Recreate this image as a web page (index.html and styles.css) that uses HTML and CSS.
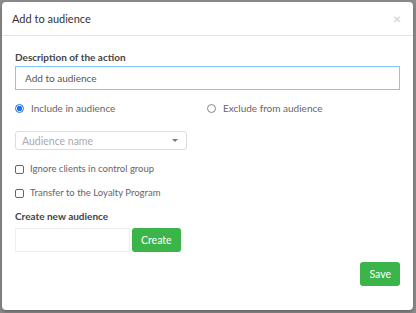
FILE: index.html
```html
<!DOCTYPE html>
<html lang="en">

<head>
    <meta charset="UTF-8">
    <title>Add to audience</title>
    <link rel="stylesheet" href="styles.css">
</head>

<body>
    <div class="modal">
        <div class="modal-header">
            <span class="modal-title">Add to audience</span>
            <span class="close">&times;</span>
        </div>
        <div class="modal-body">
            <label class="field-label">Description of the action</label>
            <input class="text-input focused" type="text" value="Add to audience">

            <div class="radio-row">
                <label class="radio"><span class="radio-dot checked"></span>Include in audience</label>
                <label class="radio"><span class="radio-dot"></span>Exclude from audience</label>
            </div>

            <div class="select">
                <span>Audience name</span>
                <span class="caret"></span>
            </div>

            <label class="check"><span class="box"></span>Ignore clients in control group</label>
            <label class="check"><span class="box"></span>Transfer to the Loyalty Program</label>

            <label class="field-label">Create new audience</label>
            <div class="create-row">
                <input class="text-input small" type="text">
                <button class="btn create">Create</button>
            </div>

            <div class="footer">
                <button class="btn">Save</button>
            </div>
        </div>
    </div>
</body>

</html>
```

FILE: styles.css
```css
body {
    margin: 0;
    height: 313px;
    background: #8c8c8c;
    font-family: 'Lato', sans-serif;
    color: #666;
    padding: 2px 3px 3px 2px;
    box-sizing: border-box;
}

.modal {
    background: white;
    border-radius: 4px;
    height: 100%;
    box-shadow: 0 2px 4px rgba(0, 0, 0, 0.3);
}

.modal-header {
    display: flex;
    justify-content: space-between;
    align-items: center;
    height: 33px;
    padding: 0 12px 0 10px;
    border-bottom: 1px solid #e5e5e5;
}

.modal-title {
    font-size: 11px;
    color: #333;
}

.close {
    font-size: 14px;
    color: #ccc;
}

.modal-body {
    padding: 15px 13px 0 13px;
}

.field-label {
    display: block;
    font-size: 10px;
    line-height: 13px;
    font-weight: 700;
    color: #444;
    margin-bottom: 2px;
}

.text-input {
    display: block;
    box-sizing: border-box;
    width: 100%;
    height: 24px;
    border: 1px solid #ddd;
    padding: 0 9px;
    font-family: inherit;
    font-size: 10px;
    color: #555;
    outline: none;
}

.text-input.focused {
    border-color: #7ecdf1;
}

.radio-row {
    display: grid;
    grid-template-columns: 192px 1fr;
    margin-top: 11px;
    font-size: 10px;
    line-height: 14px;
}

.radio {
    display: flex;
    align-items: center;
    gap: 7px;
}

.radio-dot {
    width: 9px;
    height: 9px;
    border-radius: 50%;
    border: 1px solid #888;
    box-sizing: border-box;
}

.radio-dot.checked {
    border: 1px solid #1a73e8;
    background: radial-gradient(#1a73e8 0 2.5px, white 3px);
}

.select {
    display: flex;
    justify-content: space-between;
    align-items: center;
    width: 172px;
    height: 19px;
    box-sizing: border-box;
    border: 1px solid #ddd;
    border-radius: 3px;
    margin-top: 16px;
    padding: 0 8px 0 6px;
    font-size: 10.5px;
    color: #aaa;
}

.caret {
    border: 3px solid transparent;
    border-top: 3px solid #777;
    margin-top: 3px;
}

.check {
    display: flex;
    align-items: center;
    gap: 6px;
    font-size: 9.5px;
    line-height: 14px;
    margin-top: 12px;
}

.check + .check {
    margin-top: 10px;
}

.box {
    width: 7px;
    height: 7px;
    border: 1px solid #666;
    border-radius: 2px;
}

.check + .field-label {
    margin-top: 10px;
}

.create-row {
    display: flex;
    gap: 2px;
    margin-top: 5px;
}

.text-input.small {
    width: 115px;
    border-color: #eee;
}

.btn {
    background: #3bb54a;
    color: white;
    border: none;
    border-radius: 3px;
    font-family: inherit;
    font-size: 10.5px;
    height: 24px;
    padding: 0 9px;
}

.footer {
    display: flex;
    justify-content: flex-end;
    margin-top: 10px;
}
```
